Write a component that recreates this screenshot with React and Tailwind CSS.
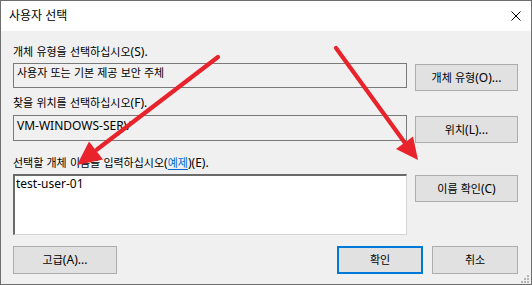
import React from "react";

const HANGUL = /([\uAC00-\uD7A3\u3131-\u318E]+)/;

function K({ t, big }) {
  return t.split(HANGUL).map((p, i) =>
    HANGUL.test(p) ? (
      <span key={i} className={big ? "text-[12px]" : "text-[11px]"}>
        {p}
      </span>
    ) : (
      <React.Fragment key={i}>{p}</React.Fragment>
    )
  );
}

function Btn({ children, className = "" }) {
  return (
    <div
      className={
        "flex items-center justify-center bg-[#e1e1e1] leading-[16px] " + className
      }
    >
      <span className="whitespace-pre">{children}</span>
    </div>
  );
}

export default function App() {
  return (
    <div className="relative w-[532px] h-[285px] overflow-hidden bg-[#f0f0f0] border border-[#6e6e6e] font-['Noto_Sans','Noto_Sans_CJK_KR',sans-serif] text-[12px] text-black flex flex-col">
      {/* title bar */}
      <div className="h-[30px] shrink-0 bg-white flex items-center justify-between pl-[8px] pr-[10px]">
        <div className="leading-[16px]">
          <K t="사용자 선택" big />
        </div>
        <svg width="10" height="10" viewBox="0 0 10 10" className="block">
          <path d="M0.5 0.5L9.5 9.5M9.5 0.5L0.5 9.5" stroke="#000" strokeWidth="1" fill="none" />
        </svg>
      </div>

      {/* body */}
      <div className="flex-1 flex flex-col pl-[12px] pr-[13px]">
        <div className="mt-[13px] h-[16px] leading-[16px]">
          <K t="개체 유형을 선택하십시오(S)." />
        </div>
        <div className="mt-[3px] flex items-start gap-[8px]">
          <div className="w-[394px] h-[25px] border border-[#7a7a7a] pl-[3px] pt-[1px] leading-[16px]">
            <K t="사용자 또는 기본 제공 보안 주체" />
          </div>
          <Btn className="mt-[1px] w-[103px] h-[27px] border border-[#adadad]">
            <K t="개체 유형(O)..." />
          </Btn>
        </div>

        <div className="mt-[4px] h-[16px] leading-[16px]">
          <K t="찾을 위치를 선택하십시오(F)." />
        </div>
        <div className="mt-[4px] flex items-start gap-[8px]">
          <div className="w-[394px] h-[26px] border border-[#7a7a7a] pl-[3px] pt-[2px] leading-[16px]">
            VM-WINDOWS-SERV
          </div>
          <Btn className="mt-[1px] w-[103px] h-[27px] border border-[#adadad]">
            <K t="위치(L)..." />
          </Btn>
        </div>

        <div className="mt-[12px] h-[16px] leading-[16px]">
          <K t="선택할 개체 이름을 입력하십시오(" />
          <span className="text-[#0066cc] underline underline-offset-2">
            <K t="예제" />
          </span>
          <K t=")(E)." />
        </div>
        <div className="mt-[3px] flex items-start gap-[8px]">
          <div className="w-[394px] h-[61px] bg-white border-t-2 border-l-2 border-r border-b border-t-[#6a6a6a] border-l-[#6a6a6a] border-r-[#d4d4d4] border-b-[#d4d4d4] pl-[1px] leading-[16px]">
            test-user-01
          </div>
          <Btn className="mt-[1px] w-[103px] h-[27px] border border-[#adadad]">
            <K t="이름 확인(C)" />
          </Btn>
        </div>

        <div className="mt-[11px] flex items-start">
          <Btn className="w-[104px] h-[28px] border border-[#adadad]">
            <K t="고급(A)..." />
          </Btn>
          <Btn className="ml-auto w-[86px] h-[28px] border-2 border-[#0078d7]">
            <K t="확인" />
          </Btn>
          <Btn className="ml-[9px] w-[86px] h-[28px] border border-[#adadad]">
            <K t="취소" />
          </Btn>
        </div>
      </div>

      {/* desktop edge behind window, top-right */}
      <div className="absolute top-[-1px] left-[455px] w-[80px] h-[1px] bg-[#1f2b38]" />

      {/* resize grip */}
      <svg
        className="absolute left-[518px] top-[272px]"
        width="12"
        height="12"
        viewBox="0 0 12 12"
      >
        <rect x="8" y="2" width="2" height="2" fill="#b5b5b5" />
        <rect x="5" y="5" width="2" height="2" fill="#b5b5b5" />
        <rect x="8" y="5" width="2" height="2" fill="#b5b5b5" />
        <rect x="2" y="8" width="2" height="2" fill="#b5b5b5" />
        <rect x="5" y="8" width="2" height="2" fill="#b5b5b5" />
        <rect x="8" y="8" width="2" height="2" fill="#b5b5b5" />
      </svg>

      {/* red annotation arrows */}
      <svg
        className="absolute left-[-1px] top-[-1px] pointer-events-none"
        width="532"
        height="285"
        viewBox="0 0 532 285"
      >
        <line x1="218" y1="57" x2="97" y2="149.5" stroke="#e8232b" strokeWidth="4.2" strokeLinecap="round" />
        <polygon points="77,165 103,159.5 89,141.5" fill="#e8232b" />
        <line x1="336" y1="48" x2="405" y2="143" stroke="#e8232b" strokeWidth="4.2" strokeLinecap="round" />
        <polygon points="418,160 413,136.5 396,149" fill="#e8232b" />
      </svg>
    </div>
  );
}
